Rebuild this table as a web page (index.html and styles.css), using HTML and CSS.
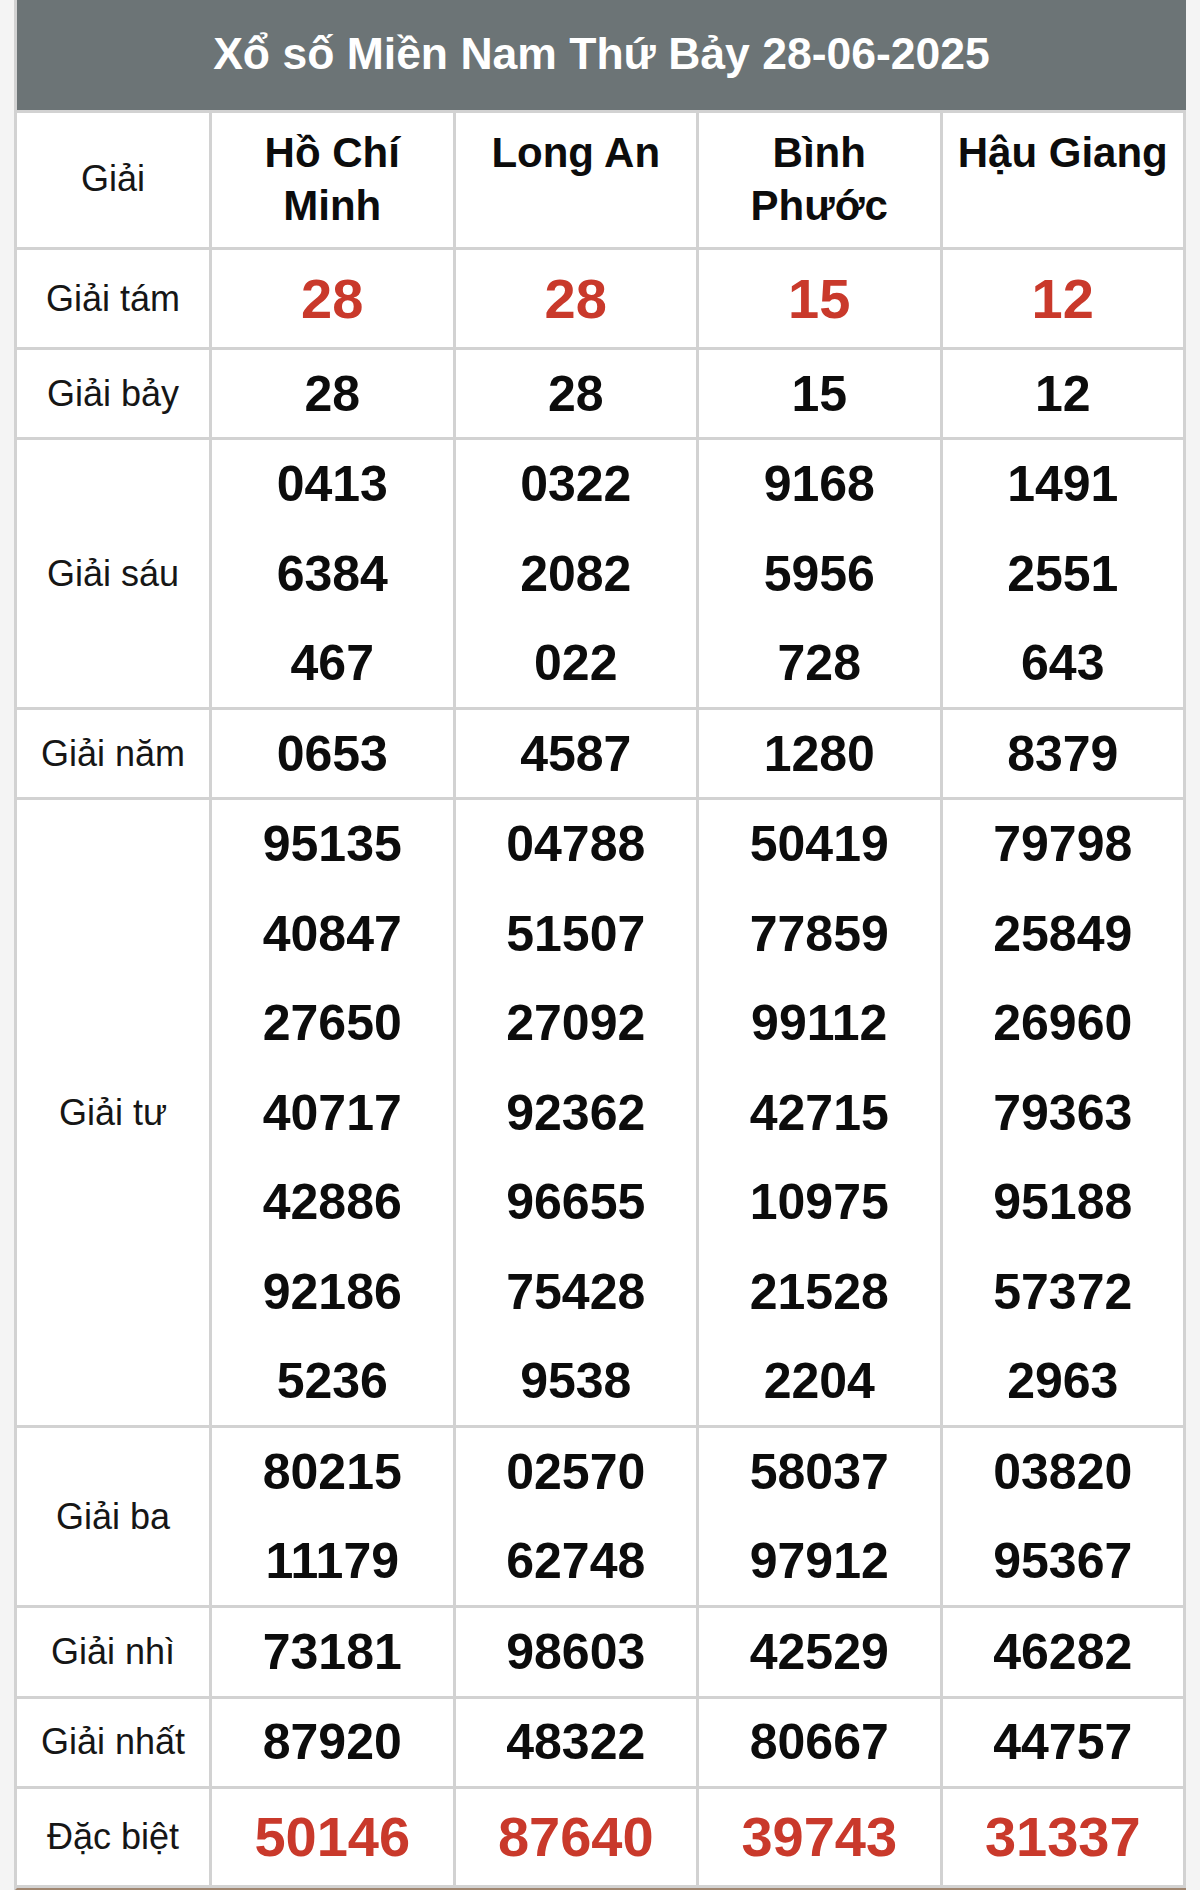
FILE: index.html
```html
<!DOCTYPE html>
<html lang="vi">
<head>
<meta charset="utf-8">
<title>Xổ số Miền Nam Thứ Bảy 28-06-2025</title>
<link rel="stylesheet" href="styles.css">
</head>
<body>
<div class="board">
  <div class="title">Xổ số Miền Nam Thứ Bảy 28-06-2025</div>
  <div class="grid">
    <div class="cell label head-label">Giải</div>
    <div class="cell prov">Hồ Chí Minh</div>
    <div class="cell prov">Long An</div>
    <div class="cell prov">Bình Phước</div>
    <div class="cell prov">Hậu Giang</div>

    <div class="cell label row-tam">Giải tám</div>
    <div class="cell nums row-tam"><div class="num red">28</div></div>
    <div class="cell nums row-tam"><div class="num red">28</div></div>
    <div class="cell nums row-tam"><div class="num red">15</div></div>
    <div class="cell nums row-tam"><div class="num red">12</div></div>

    <div class="cell label">Giải bảy</div>
    <div class="cell nums"><div class="num">28</div></div>
    <div class="cell nums"><div class="num">28</div></div>
    <div class="cell nums"><div class="num">15</div></div>
    <div class="cell nums"><div class="num">12</div></div>

    <div class="cell label">Giải sáu</div>
    <div class="cell nums"><div class="num">0413</div><div class="num">6384</div><div class="num">467</div></div>
    <div class="cell nums"><div class="num">0322</div><div class="num">2082</div><div class="num">022</div></div>
    <div class="cell nums"><div class="num">9168</div><div class="num">5956</div><div class="num">728</div></div>
    <div class="cell nums"><div class="num">1491</div><div class="num">2551</div><div class="num">643</div></div>

    <div class="cell label">Giải năm</div>
    <div class="cell nums"><div class="num">0653</div></div>
    <div class="cell nums"><div class="num">4587</div></div>
    <div class="cell nums"><div class="num">1280</div></div>
    <div class="cell nums"><div class="num">8379</div></div>

    <div class="cell label">Giải tư</div>
    <div class="cell nums"><div class="num">95135</div><div class="num">40847</div><div class="num">27650</div><div class="num">40717</div><div class="num">42886</div><div class="num">92186</div><div class="num">5236</div></div>
    <div class="cell nums"><div class="num">04788</div><div class="num">51507</div><div class="num">27092</div><div class="num">92362</div><div class="num">96655</div><div class="num">75428</div><div class="num">9538</div></div>
    <div class="cell nums"><div class="num">50419</div><div class="num">77859</div><div class="num">99112</div><div class="num">42715</div><div class="num">10975</div><div class="num">21528</div><div class="num">2204</div></div>
    <div class="cell nums"><div class="num">79798</div><div class="num">25849</div><div class="num">26960</div><div class="num">79363</div><div class="num">95188</div><div class="num">57372</div><div class="num">2963</div></div>

    <div class="cell label">Giải ba</div>
    <div class="cell nums"><div class="num">80215</div><div class="num">11179</div></div>
    <div class="cell nums"><div class="num">02570</div><div class="num">62748</div></div>
    <div class="cell nums"><div class="num">58037</div><div class="num">97912</div></div>
    <div class="cell nums"><div class="num">03820</div><div class="num">95367</div></div>

    <div class="cell label">Giải nhì</div>
    <div class="cell nums"><div class="num">73181</div></div>
    <div class="cell nums"><div class="num">98603</div></div>
    <div class="cell nums"><div class="num">42529</div></div>
    <div class="cell nums"><div class="num">46282</div></div>

    <div class="cell label">Giải nhất</div>
    <div class="cell nums"><div class="num">87920</div></div>
    <div class="cell nums"><div class="num">48322</div></div>
    <div class="cell nums"><div class="num">80667</div></div>
    <div class="cell nums"><div class="num">44757</div></div>

    <div class="cell label row-db">Đặc biệt</div>
    <div class="cell nums row-db"><div class="num red">50146</div></div>
    <div class="cell nums row-db"><div class="num red">87640</div></div>
    <div class="cell nums row-db"><div class="num red">39743</div></div>
    <div class="cell nums row-db"><div class="num red">31337</div></div>
  </div>
</div>
</body>
</html>
```

FILE: styles.css
```css
* {
  box-sizing: border-box;
}

html, body {
  margin: 0;
  padding: 0;
  background: #f4f4f4;
}

body {
  font-family: "Liberation Sans", Arial, Helvetica, sans-serif;
  color: #111;
}

.board {
  margin-left: 14px;
  width: 1172px;
  border-left: 3px solid #d2d2d2;
  border-bottom: 3px solid #a08670;
  background: #fff;
}

.title {
  height: 113px;
  background: #6c7476;
  border-bottom: 3px solid #d2d2d2;
  color: #fff;
  font-weight: 700;
  font-size: 44.5px;
  display: flex;
  align-items: center;
  justify-content: center;
  padding-bottom: 3px;
}

.grid {
  display: grid;
  grid-template-columns: 195px repeat(4, 243.5px);
}

.cell {
  border-right: 3px solid #d2d2d2;
  border-bottom: 3px solid #d2d2d2;
  background: #fff;
}

.label {
  display: flex;
  align-items: center;
  justify-content: center;
  font-size: 36px;
  color: #161616;
}

.prov {
  padding: 13px 12px 15px;
  text-align: center;
  font-weight: 700;
  font-size: 42px;
  line-height: 53px;
  color: #0c0c0c;
}

.head-label {
  padding-bottom: 2px;
}

.nums {
  display: flex;
  flex-direction: column;
  gap: 2.2px;
}

.num {
  height: 87.4px;
  display: flex;
  align-items: center;
  justify-content: center;
  font-weight: 700;
  font-size: 50px;
  color: #0c0c0c;
}

.row-tam .num {
  height: 97px;
}

.row-db .num {
  height: 96px;
}

.label.row-tam {
  height: 100px;
}

.num.red {
  color: #c9392b;
  font-size: 56px;
}
```
